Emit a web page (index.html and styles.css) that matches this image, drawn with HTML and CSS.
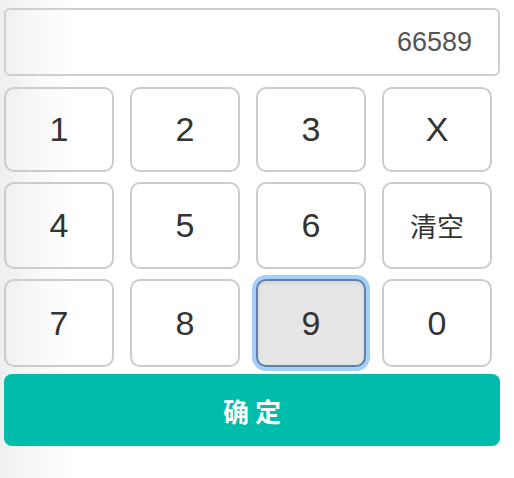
FILE: index.html
```html
<!DOCTYPE html>
<html lang="zh">
<head>
<meta charset="utf-8">
<title>Keypad</title>
<link rel="stylesheet" href="styles.css">
</head>
<body>
<div class="pad">
  <div class="display">66589</div>
  <div class="keys">
    <div class="key">1</div>
    <div class="key">2</div>
    <div class="key">3</div>
    <div class="key">X</div>
    <div class="key">4</div>
    <div class="key">5</div>
    <div class="key">6</div>
    <div class="key key-text">清空</div>
    <div class="key">7</div>
    <div class="key">8</div>
    <div class="key key-active">9</div>
    <div class="key">0</div>
  </div>
  <div class="confirm">确 定</div>
</div>
</body>
</html>
```
FILE: styles.css
```css
html, body {
  margin: 0;
  padding: 0;
}
body {
  width: 514px;
  height: 478px;
  background: linear-gradient(to right, #efefef 0px, #f8f8f8 35px, #ffffff 75px);
  font-family: "Liberation Sans", Arial, "Noto Sans CJK SC", sans-serif;
}
.pad {
  padding: 8px 0 0 4px;
}
.display {
  box-sizing: border-box;
  width: 496px;
  height: 68px;
  border: 2px solid #cfcfcf;
  border-radius: 6px;
  display: flex;
  align-items: center;
  justify-content: flex-end;
  padding-right: 26px;
  font-size: 27px;
  color: #555;
}
.keys {
  margin-top: 11px;
  display: grid;
  grid-template-columns: repeat(4, 110px);
  grid-template-rows: 85px 87px 88px;
  column-gap: 16px;
  row-gap: 10px;
}
.key {
  box-sizing: border-box;
  border: 2px solid #cccccc;
  border-radius: 10px;
  display: flex;
  align-items: center;
  justify-content: center;
  font-size: 34px;
  color: #333;
}
.key-text {
  font-size: 27px;
  font-family: "Noto Sans CJK SC", sans-serif;
}
.key-active {
  background: #e6e6e6;
  border-color: #5e80ad;
  box-shadow: 0 0 0 4px #a4cff8, inset 0 2px 4px rgba(0,0,0,0.08);
}
.confirm {
  margin-top: 7px;
  width: 496px;
  height: 72px;
  border-radius: 8px;
  background: #00bcaa;
  color: #fff;
  display: flex;
  align-items: center;
  justify-content: center;
  font-family: "Noto Sans CJK SC", sans-serif;
  font-size: 26px;
  font-weight: 700;
}
```
